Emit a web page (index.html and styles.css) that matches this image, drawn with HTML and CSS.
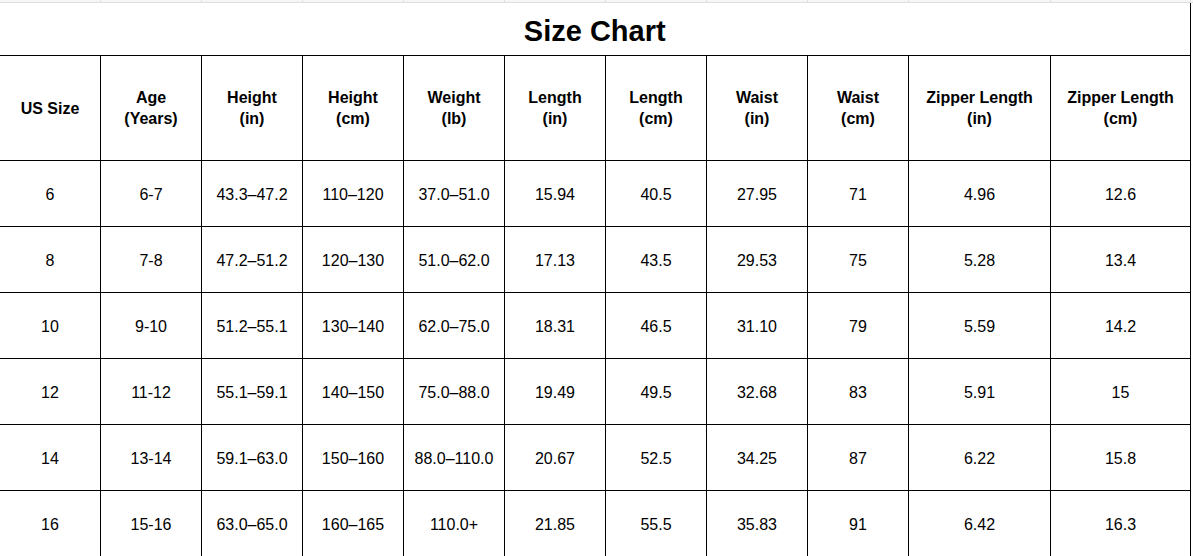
FILE: index.html
```html
<!DOCTYPE html>
<html>
<head>
<meta charset="utf-8">
<link rel="stylesheet" href="styles.css">
</head>
<body>
<div class="strip">
  <span></span><span></span><span></span><span></span><span></span><span></span><span></span><span></span><span></span><span></span><span></span>
</div>
<table class="chart">
  <colgroup>
    <col class="c"><col class="c"><col class="c"><col class="c"><col class="c"><col class="c"><col class="c"><col class="c"><col class="c"><col class="cz1"><col class="cz2">
  </colgroup>
  <tr class="title-row"><td colspan="11" class="title">Size Chart</td></tr>
  <tr class="head-row">
    <th>US Size</th>
    <th>Age<br>(Years)</th>
    <th>Height<br>(in)</th>
    <th>Height<br>(cm)</th>
    <th>Weight<br>(lb)</th>
    <th>Length<br>(in)</th>
    <th>Length<br>(cm)</th>
    <th>Waist<br>(in)</th>
    <th>Waist<br>(cm)</th>
    <th>Zipper Length<br>(in)</th>
    <th>Zipper Length<br>(cm)</th>
  </tr>
  <tr class="data"><td>6</td><td>6-7</td><td>43.3–47.2</td><td>110–120</td><td>37.0–51.0</td><td>15.94</td><td>40.5</td><td>27.95</td><td>71</td><td>4.96</td><td>12.6</td></tr>
  <tr class="data"><td>8</td><td>7-8</td><td>47.2–51.2</td><td>120–130</td><td>51.0–62.0</td><td>17.13</td><td>43.5</td><td>29.53</td><td>75</td><td>5.28</td><td>13.4</td></tr>
  <tr class="data"><td>10</td><td>9-10</td><td>51.2–55.1</td><td>130–140</td><td>62.0–75.0</td><td>18.31</td><td>46.5</td><td>31.10</td><td>79</td><td>5.59</td><td>14.2</td></tr>
  <tr class="data"><td>12</td><td>11-12</td><td>55.1–59.1</td><td>140–150</td><td>75.0–88.0</td><td>19.49</td><td>49.5</td><td>32.68</td><td>83</td><td>5.91</td><td>15</td></tr>
  <tr class="data"><td>14</td><td>13-14</td><td>59.1–63.0</td><td>150–160</td><td>88.0–110.0</td><td>20.67</td><td>52.5</td><td>34.25</td><td>87</td><td>6.22</td><td>15.8</td></tr>
  <tr class="data"><td>16</td><td>15-16</td><td>63.0–65.0</td><td>160–165</td><td>110.0+</td><td>21.85</td><td>55.5</td><td>35.83</td><td>91</td><td>6.42</td><td>16.3</td></tr>
</table>
</body>
</html>
```

FILE: styles.css
```css
html, body {
  margin: 0;
  padding: 0;
  background: #ffffff;
  overflow: hidden;
}
body {
  font-family: "Liberation Sans", Arial, sans-serif;
  color: #000;
}
.strip {
  display: grid;
  grid-template-columns: 101px 101px 101px 101px 101px 101px 101px 101px 101px 142px 140px 1fr;
  height: 2px;
  background: #f6f6f6;
  border-bottom: 1px solid #dedede;
}
.strip span {
  border-right: 1px solid #e0e0e0;
}
.chart {
  border-collapse: collapse;
  table-layout: fixed;
  width: 1192px;
  margin-left: -1px;
}
.c { width: 101px; }
.cz1 { width: 142px; }
.cz2 { width: 140px; }
.chart td, .chart th {
  border: 1px solid #000;
  text-align: center;
  vertical-align: middle;
  padding: 0;
  font-size: 16px;
  line-height: 21px;
}
.chart th {
  font-weight: bold;
}
.title-row td.title {
  border-top: none;
  border-left: none;
  height: 49px;
  padding-top: 3px;
  font-size: 29px;
  font-weight: bold;
  line-height: 32px;
}
.head-row th { height: 104px; }
.data td {
  height: 63px;
  padding-top: 2px;
}
```
